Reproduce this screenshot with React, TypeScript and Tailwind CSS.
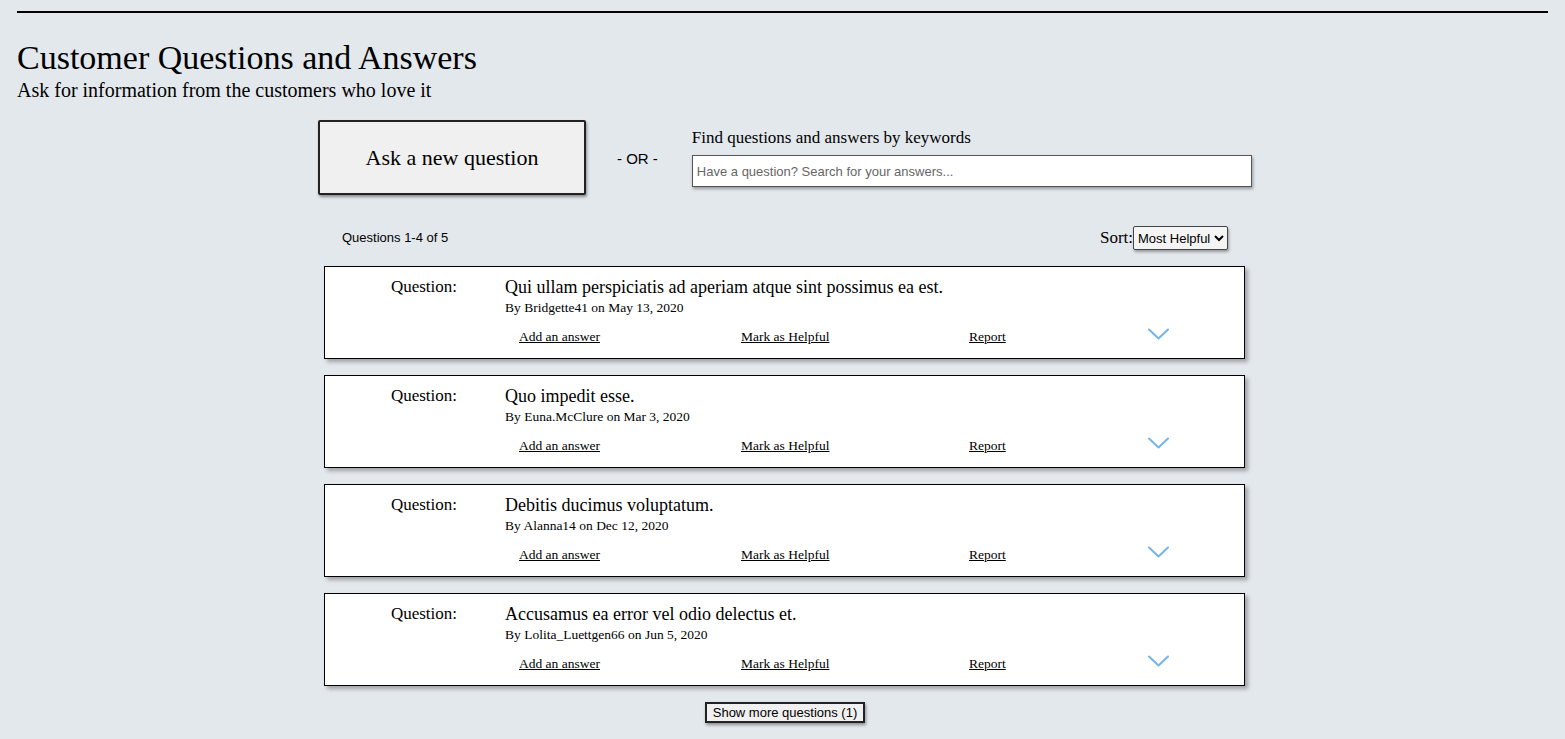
import React from 'react';

type Q = { body: string; asker: string; date: string };

const questions: Q[] = [
  { body: 'Qui ullam perspiciatis ad aperiam atque sint possimus ea est.', asker: 'Bridgette41', date: 'May 13, 2020' },
  { body: 'Quo impedit esse.', asker: 'Euna.McClure', date: 'Mar 3, 2020' },
  { body: 'Debitis ducimus voluptatum.', asker: 'Alanna14', date: 'Dec 12, 2020' },
  { body: 'Accusamus ea error vel odio delectus et.', asker: 'Lolita_Luettgen66', date: 'Jun 5, 2020' },
];

const serif = "font-['Liberation_Serif',serif]";
const sans = "font-['Liberation_Sans',Arial,sans-serif]";

const Chevron: React.FC = () => (
  <svg width="21" height="12" viewBox="0 0 21 12" fill="none">
    <path d="M1 1.5 L10.5 10.5 L20 1.5" stroke="#74b4ea" strokeWidth="2" strokeLinecap="round" strokeLinejoin="round" />
  </svg>
);

const QuestionCard: React.FC<{ q: Q }> = ({ q }) => (
  <div className="ml-[6px] mr-[7px] bg-white border border-black shadow-[3px_3px_4px_rgba(0,0,0,0.3)] pt-[10px] pb-[13px]">
    <div className="flex">
      <div className="w-[132px] text-right text-[17px] leading-[20px]">Question:</div>
      <div className="ml-[48px]">
        <div className="text-[18px] leading-[21px]">{q.body}</div>
        <div className="text-[13.5px] leading-[17px] mt-[1px]">
          By {q.asker} on {q.date}
        </div>
      </div>
    </div>
    <div className="flex items-center ml-[194px] mt-[12px] text-[13.5px] leading-[17px]">
      <a className="w-[222px] underline cursor-pointer">Add an answer</a>
      <a className="w-[228px] underline cursor-pointer">Mark as Helpful</a>
      <a className="w-[179px] underline cursor-pointer">Report</a>
      <span className="-mt-[6px]">
        <Chevron />
      </span>
    </div>
  </div>
);

const App: React.FC = () => {
  return (
    <div className={`min-h-screen bg-[#e3e8ed] text-black ${serif}`}>
      <div className="px-[17px] pt-[11px]">
        <div className="h-[2px] bg-black" />
        <h1 className="text-[34px] leading-[40px] mt-[25px]">Customer Questions and Answers</h1>
        <p className="text-[20px] leading-[22px] mt-[1px]">Ask for information from the customers who love it</p>
      </div>

      <div className="w-[934px] ml-[318px] mt-[19px]">
        <div className="flex items-start">
          <button className="w-[268px] h-[75px] bg-[#f0f0f0] border-2 border-[#222] rounded-[2px] shadow-[1px_2px_3px_rgba(0,0,0,0.4)] text-[22px]">
            Ask a new question
          </button>
          <div className={`${sans} text-[15px] ml-[31px] mt-[28px]`}>- OR -</div>
          <div className="ml-[34px] mt-[8px] flex-1">
            <label className="block text-[17px] leading-[20px]">Find questions and answers by keywords</label>
            <input
              className={`${sans} mt-[7px] w-full h-[32px] bg-white border border-[#555] px-[4px] text-[13px] placeholder:text-[#666] shadow-[1px_2px_3px_rgba(0,0,0,0.35)] outline-none`}
              placeholder="Have a question? Search for your answers..."
            />
          </div>
        </div>

        <div className="flex items-center justify-between mt-[30px] h-[26px]">
          <div className={`${sans} text-[13px] ml-[24px]`}>Questions 1-4 of 5</div>
          <div className="flex items-center mr-[24px]">
            <span className="text-[17px]">Sort:</span>
            <select className={`${sans} text-[13px] h-[24px] bg-[#f4f4f4] border border-[#444] rounded-[2px] shadow-[1px_2px_3px_rgba(0,0,0,0.35)] px-0`}>
              <option>Most Helpful</option>
              <option>Newest</option>
            </select>
          </div>
        </div>

        <div className="flex flex-col gap-[16px] mt-[15px]">
          {questions.map((q) => (
            <QuestionCard key={q.asker} q={q} />
          ))}
        </div>

        <div className="flex justify-center mt-[16px] pb-[16px]">
          <button className={`${sans} text-[13px] h-[21px] px-[6px] bg-[#f0f0f0] border-2 border-[#222] shadow-[1px_2px_3px_rgba(0,0,0,0.4)] leading-none`}>
            Show more questions (1)
          </button>
        </div>
      </div>
    </div>
  );
};

export default App;
